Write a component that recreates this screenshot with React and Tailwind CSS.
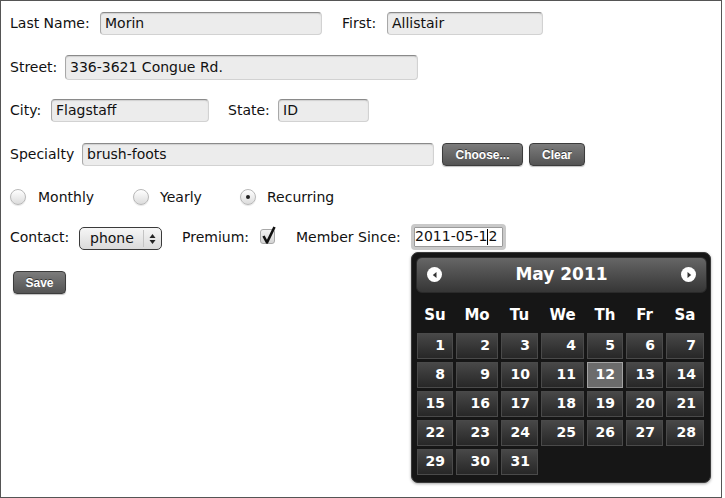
import React from "react";

const weeks = [
  [1, 2, 3, 4, 5, 6, 7],
  [8, 9, 10, 11, 12, 13, 14],
  [15, 16, 17, 18, 19, 20, 21],
  [22, 23, 24, 25, 26, 27, 28],
  [29, 30, 31],
];
const heads = ["Su", "Mo", "Tu", "We", "Th", "Fr", "Sa"];

function TextInput({ className, value }) {
  return (
    <div
      className={
        "flex items-center rounded-[4px] border border-[#d2d2d2] border-t-[#8a8a8a] border-l-[#a8a8a8] bg-[#ececec] pl-[4px] text-[14px] text-[#111] shadow-[inset_0_1px_1px_rgba(0,0,0,0.12)] whitespace-nowrap " +
        className
      }
    >
      {value}
    </div>
  );
}

function DarkButton({ className, children }) {
  return (
    <div
      className={
        "flex items-center justify-center rounded-[4px] border border-[#3c3c3c] bg-linear-to-b from-[#7c7c7c] to-[#545454] font-['Liberation_Sans',sans-serif] text-[12px] font-bold text-white shadow-[0_1px_1px_rgba(0,0,0,0.25)] [text-shadow:0_-1px_0_rgba(0,0,0,0.5)] " +
        className
      }
    >
      {children}
    </div>
  );
}

function Radio({ checked }) {
  return (
    <div className="flex h-[16px] w-[16px] items-center justify-center rounded-full border border-[#b8b8b8] bg-linear-to-b from-[#ffffff] to-[#dcdcdc] shadow-[0_1px_1px_rgba(0,0,0,0.1)]">
      {checked && <div className="h-[4px] w-[4px] rounded-full bg-[#222]" />}
    </div>
  );
}

function Arrow({ dir }) {
  return (
    <div className="flex h-[15px] w-[15px] items-center justify-center rounded-full bg-white">
      <svg width="8" height="8" viewBox="0 0 8 8">
        {dir === "left" ? (
          <path d="M5.5 1 L1.8 4 L5.5 7 Z" fill="#333" />
        ) : (
          <path d="M2.5 1 L6.2 4 L2.5 7 Z" fill="#333" />
        )}
      </svg>
    </div>
  );
}

function Calendar() {
  return (
    <div className="absolute left-0 top-[28px] w-[300px] rounded-[7px] border border-[#3a3a3a] bg-[#161616] p-[4px] pb-[7px] shadow-[0_1px_3px_rgba(0,0,0,0.35)] font-['DejaVu_Sans',sans-serif]">
      <div className="flex h-[36px] w-[291px] items-center justify-between rounded-[6px] border border-[#2a2a2a] bg-linear-to-b from-[#666666] to-[#363636] px-[10px]">
        <Arrow dir="left" />
        <span className="text-[17px] font-bold text-white">May 2011</span>
        <Arrow dir="right" />
      </div>
      <div className="ml-[1px] grid h-[40px] grid-cols-[36px_42px_37px_43px_36px_37px_38px] items-center gap-x-[3px] pt-[5px]">
        {heads.map((h) => (
          <div key={h} className="text-center text-[15px] font-bold text-white">
            {h}
          </div>
        ))}
      </div>
      <div className="ml-[1px] grid grid-cols-[36px_42px_37px_43px_36px_37px_38px] gap-x-[3px] gap-y-[3px]">
        {weeks.flat().map((d) =>
          d === 12 ? (
            <div
              key={d}
              className="flex h-[26px] items-center justify-end border border-[#a3a3a3] bg-[#6c6c6c] pr-[7px] text-[14px] font-bold text-white"
            >
              {d}
            </div>
          ) : (
            <div
              key={d}
              className="flex h-[26px] items-center justify-end border border-[#4a4a4a] bg-linear-to-b from-[#484848] to-[#272727] pr-[7px] text-[14px] font-bold text-white"
            >
              {d}
            </div>
          )
        )}
      </div>
    </div>
  );
}

export default function App() {
  return (
    <div className="relative h-[498px] w-[722px] overflow-hidden border border-[#555] bg-white font-['DejaVu_Sans',sans-serif] text-[14px] text-[#111]">
      <div className="flex flex-col pl-[9px] pt-[11px]">
        {/* Row 1 */}
        <div className="flex h-[23px] items-center">
          <span className="w-[90px] whitespace-nowrap">Last Name:</span>
          <TextInput className="h-[23px] w-[222px]" value="Morin" />
          <span className="ml-[20px] w-[45px]">First:</span>
          <TextInput className="h-[23px] w-[156px]" value="Allistair" />
        </div>
        {/* Row 2 */}
        <div className="mt-[20px] flex h-[25px] items-center">
          <span className="w-[55px]">Street:</span>
          <TextInput className="h-[25px] w-[353px]" value="336-3621 Congue Rd." />
        </div>
        {/* Row 3 */}
        <div className="mt-[19px] flex h-[23px] items-center">
          <span className="w-[41px]">City:</span>
          <TextInput className="h-[23px] w-[158px]" value="Flagstaff" />
          <span className="ml-[19px] w-[50px]">State:</span>
          <TextInput className="h-[23px] w-[91px]" value="ID" />
        </div>
        {/* Row 4 */}
        <div className="mt-[21px] flex h-[23px] items-center">
          <span className="w-[72px]">Specialty</span>
          <TextInput className="h-[23px] w-[352px]" value="brush-foots" />
          <DarkButton className="ml-[8px] h-[23px] w-[81px]">Choose...</DarkButton>
          <DarkButton className="ml-[6px] h-[23px] w-[56px]">Clear</DarkButton>
        </div>
        {/* Row 5 radios */}
        <div className="mt-[21px] flex h-[20px] items-center">
          <div className="flex w-[123px] items-center">
            <Radio />
            <span className="ml-[12px]">Monthly</span>
          </div>
          <div className="flex w-[107px] items-center">
            <Radio />
            <span className="ml-[11px]">Yearly</span>
          </div>
          <div className="flex items-center">
            <Radio checked />
            <span className="ml-[11px]">Recurring</span>
          </div>
        </div>
        {/* Row 6 */}
        <div className="mt-[17px] flex h-[27px] items-center">
          <span className="w-[69px]">Contact:</span>
          <div className="mt-[2px] flex h-[23px] w-[83px] items-center rounded-[5px] border border-[#3a3a3a] bg-linear-to-b from-[#f6f6f6] to-[#dadada]">
            <span className="ml-[10px] w-[53px]">phone</span>
            <div className="h-[17px] w-px bg-[#c4c4c4]" />
            <svg className="ml-[5px]" width="7" height="12" viewBox="0 0 7 12">
              <path d="M3.5 1 L6.5 5 L0.5 5 Z" fill="#222" />
              <path d="M3.5 11 L6.5 7 L0.5 7 Z" fill="#222" />
            </svg>
          </div>
          <span className="ml-[20px] w-[78px]">Premium:</span>
          <div className="relative mt-[-2px] h-[15px] w-[15px] rounded-[3px] border border-[#a8a8a8] bg-linear-to-b from-[#f2f2f2] to-[#d4d4d4]">
            <svg
              className="absolute left-[0px] top-[-5px]"
              width="16"
              height="20"
              viewBox="0 0 16 20"
            >
              <path
                d="M2.5 11 L6 17.5 L13.5 2"
                stroke="#111"
                strokeWidth="2.6"
                fill="none"
                strokeLinejoin="round"
              />
            </svg>
          </div>
          <span className="ml-[21px] w-[115px] whitespace-nowrap">Member Since:</span>
          <div className="relative -mt-[2px]">
            <div className="flex h-[26px] w-[95px] items-center rounded-[4px] border-[3px] border-[#c9c9c9] bg-white pl-[1px] text-[14px] text-[#111] shadow-[inset_0_0_0_1px_#9a9a9a]">
              <span>2011-05-1</span>
              <span className="h-[16px] w-px bg-black" />
              <span>2</span>
            </div>
            <Calendar />
          </div>
        </div>
        {/* Row 7 */}
        <div className="mt-[20px] flex">
          <DarkButton className="ml-[3px] h-[23px] w-[53px]">Save</DarkButton>
        </div>
      </div>
    </div>
  );
}
